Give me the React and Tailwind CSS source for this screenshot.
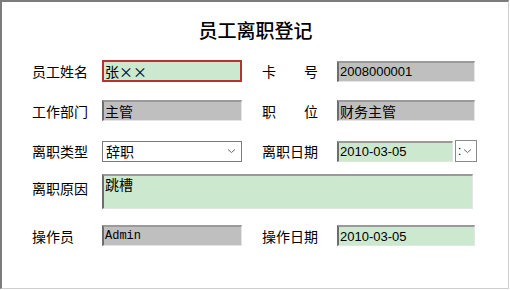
const cjk = { fontFamily: '"Noto Sans CJK SC", "Liberation Sans", sans-serif' };
const sans = { fontFamily: '"Liberation Sans", "Noto Sans CJK SC", sans-serif' };
const mono = { fontFamily: '"Liberation Mono", monospace' };

// 小下拉箭头
const Chevron = () => (
  <svg width="9" height="6" viewBox="0 0 9 6" className="shrink-0">
    <path d="M1 1.5 L4.5 4.5 L8 1.5" fill="none" stroke="#6b6b6b" strokeWidth="1" />
  </svg>
);

// 凹陷输入框
const Sunken = ({ bg, className = '', children, font = cjk, size = 'text-[14px]' }) => (
  <div
    className={`flex items-center border-t-2 border-l-2 border-t-[#9a9a9a] border-l-[#6e6e6e] border-b border-r border-b-[#e4e4e4] border-r-[#e4e4e4] pl-[1px] leading-none text-black ${size} ${bg} ${className}`}
    style={font}
  >
    {children}
  </div>
);

const Label = ({ children, className = '' }) => (
  <div className={`text-[14px] leading-[20px] text-black ${className}`} style={cjk}>
    {children}
  </div>
);

const Spread = ({ a, b }) => (
  <div className="w-[56px] flex justify-between text-[14px] leading-[20px] text-black" style={cjk}>
    <span>{a}</span>
    <span>{b}</span>
  </div>
);

export default function App() {
  return (
    <div className="w-[510px] h-[290px] bg-white">
      <div className="w-[509px] h-[289px] box-border border-t-2 border-l-2 border-t-[#7c7c7c] border-l-[#7c7c7c] border-r border-b border-r-[#cfcfcf] border-b-[#cfcfcf] pl-[30px] pt-[16px]">
        {/* 标题 */}
        <div className="w-[447px] text-center text-[19px] leading-[24px] font-medium text-black" style={cjk}>
          员工离职登记
        </div>

        {/* 第一行 */}
        <div className="flex items-center mt-[18px] h-[22px]">
          <Label className="w-[70px]">员工姓名</Label>
          <div className="w-[140px] h-[22px] flex items-center border-2 border-[#b83232] bg-[#cce8cf] pl-[1px] text-[14px] leading-none" style={cjk}>
            张××
          </div>
          <div className="ml-[20px]"><Spread a="卡" b="号" /></div>
          <Sunken bg="bg-[#bfbfbf]" className="ml-[19px] w-[138px] h-[21px]" font={sans} size="text-[13px]">
            2008000001
          </Sunken>
        </div>

        {/* 第二行 */}
        <div className="flex items-center mt-[18px] h-[21px]">
          <Label className="w-[70px]">工作部门</Label>
          <Sunken bg="bg-[#bfbfbf]" className="w-[140px] h-[21px]">主管</Sunken>
          <div className="ml-[20px]"><Spread a="职" b="位" /></div>
          <Sunken bg="bg-[#bfbfbf]" className="ml-[19px] w-[138px] h-[21px]">财务主管</Sunken>
        </div>

        {/* 第三行 */}
        <div className="flex items-center mt-[19px] h-[22px]">
          <Label className="w-[70px]">离职类型</Label>
          <div className="w-[140px] h-[21px] flex items-center justify-between border border-[#7a7a7a] bg-white pl-[3px] pr-[5px] text-[14px] leading-none" style={cjk}>
            <span>辞职</span>
            <Chevron />
          </div>
          <Label className="ml-[20px] w-[56px]">离职日期</Label>
          <Sunken bg="bg-[#cce8cf]" className="ml-[19px] w-[116px] h-[21px]" font={sans} size="text-[13px]">
            2010-03-05
          </Sunken>
          <div className="ml-[2px] w-[22px] h-[22px] flex items-center border border-[#8a8a8a] bg-white pl-[2px] gap-[2px] text-[12px] leading-none" style={sans}>
            <span>:</span>
            <Chevron />
          </div>
        </div>

        {/* 第四行 */}
        <div className="flex items-start mt-[12px]">
          <Label className="w-[70px] mt-[4px]">离职原因</Label>
          <Sunken bg="bg-[#cce8cf]" className="w-[371px] h-[35px] !items-start pt-[1px]">跳槽</Sunken>
        </div>

        {/* 第五行 */}
        <div className="flex items-center mt-[16px] h-[21px]">
          <Label className="w-[70px]">操作员</Label>
          <Sunken bg="bg-[#bfbfbf]" className="w-[140px] h-[21px]" font={mono} size="text-[12px]">
            Admin
          </Sunken>
          <Label className="ml-[20px] w-[56px]">操作日期</Label>
          <Sunken bg="bg-[#cce8cf]" className="ml-[19px] w-[138px] h-[21px]" font={sans} size="text-[13px]">
            2010-03-05
          </Sunken>
        </div>
      </div>
    </div>
  );
}
